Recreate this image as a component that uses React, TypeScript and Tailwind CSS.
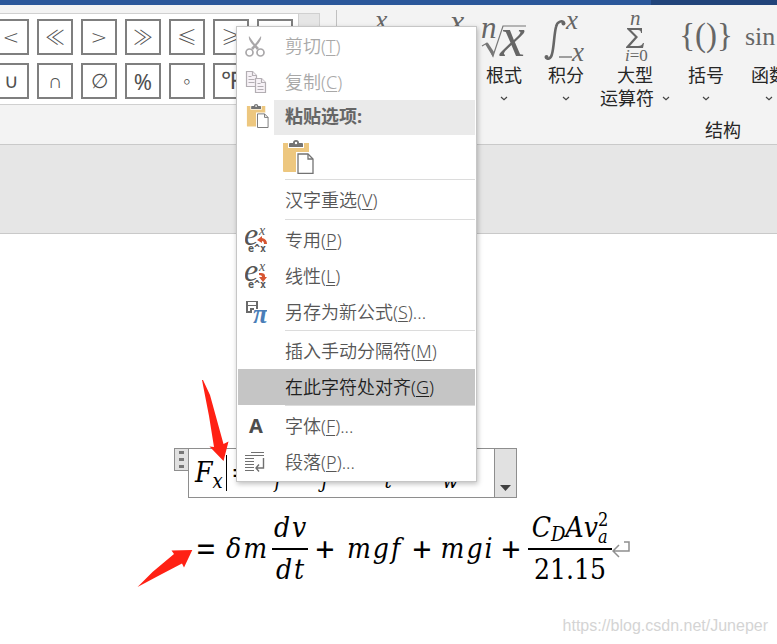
import React from "react";

const uiFont = "font-['Noto_Sans','Noto_Sans_CJK_SC',sans-serif]";
const cjkFont = "font-['Open_Sans','Noto_Sans_CJK_SC',sans-serif]";
const mathFont = "font-['DejaVu_Serif_Condensed','DejaVu_Serif',serif]";

const thin = "font-['DejaVu_Sans',sans-serif] text-xl font-extralight";
const wide = "font-['Noto_Sans_CJK_SC',sans-serif] text-xl font-light";
const plain = "font-['Noto_Sans',sans-serif] text-[22px] font-normal";
const serif = "font-['Liberation_Serif',serif] text-2xl font-normal";

const symbols = [
  { char: "<", style: thin },
  { char: "≪", style: wide },
  { char: ">", style: thin },
  { char: "≫", style: wide },
  { char: "≤", style: wide },
  { char: "≥", style: wide },
  { char: "∓", style: wide },
  { char: "∪", style: thin },
  { char: "∩", style: thin },
  { char: "∅", style: thin },
  { char: "%", style: plain },
  { char: "∘", style: thin },
  { char: "℉", style: serif },
  { char: "℃", style: serif },
];

function Chevron() {
  return (
    <svg width="8" height="5" viewBox="0 0 8 5" fill="none" stroke="#444" strokeWidth="1.2">
      <path d="M1 1l3 2.6L7 1" />
    </svg>
  );
}

function SymbolGallery() {
  return (
    <div className="flex w-80 shrink-0 border-y border-[#d0d0d0]">
      <div className="flex-1 overflow-hidden bg-white py-[5px]">
        <div className="-ml-[7px] grid w-[300px] grid-cols-7 gap-2">
          {symbols.map(({ char, style }) => (
            <button
              key={char}
              className={`${style} flex size-9 items-center justify-center border-2 border-[#7f7f7f] bg-white leading-none text-[#505050]`}
            >
              {char}
            </button>
          ))}
        </div>
      </div>
      <div className="w-[22px] border-x border-[#d0d0d0] bg-[#e6e6e6]" />
    </div>
  );
}

const glyphStyle = "fill-[#666] font-['Liberation_Serif',serif]";

function FractionArt() {
  return (
    <svg width="60" height="50" viewBox="0 0 60 50" className={glyphStyle}>
      <text x="24" y="15" fontSize="28" fontStyle="italic">x</text>
      <text x="24" y="44" fontSize="28" fontStyle="italic">y</text>
    </svg>
  );
}
function ScriptArt() {
  return (
    <svg width="60" height="50" viewBox="0 0 60 50" className={glyphStyle}>
      <text x="37" y="18" fontSize="32" fontStyle="italic">x</text>
      <text x="10" y="42" fontSize="40" fontStyle="italic">e</text>
    </svg>
  );
}
function RadicalArt() {
  return (
    <svg width="60" height="50" viewBox="0 0 60 50" className={glyphStyle}>
      <text x="7" y="24" fontSize="31" fontStyle="italic">n</text>
      <text x="26" y="42" fontSize="56" fontStyle="italic">x</text>
      <path d="M8 32l5-3 6 13L29 12h23" fill="none" stroke="#777" strokeWidth="1.2" />
      <path d="M11 30l3-1 6 9-1 5z" fill="#777" />
    </svg>
  );
}
function IntegralArt() {
  return (
    <svg width="60" height="50" viewBox="0 0 60 50" className={glyphStyle}>
      <path
        d="M28 9c-1-3-7-2-8 4-2 8-2 20-4 27-1 5-5 6-6 3"
        fill="none"
        stroke="#666"
        strokeWidth="2.6"
      />
      <circle cx="27.500" cy="9.500" r="2" />
      <circle cx="10.500" cy="43" r="2" />
      <text x="30" y="15" fontSize="27" fontStyle="italic">x</text>
      <path d="M23 43h13" stroke="#666" strokeWidth="1.2" />
      <text x="36" y="47" fontSize="27" fontStyle="italic">x</text>
    </svg>
  );
}
function SumArt() {
  return (
    <svg width="60" height="50" viewBox="0 0 60 50" className={glyphStyle}>
      <text x="25" y="11" fontSize="21" fontStyle="italic">n</text>
      <path d="M22 14h15v5h-1c0-2-1-3-3-3h-7l7 7-8 9h8c3 0 4-1 5-3h1l-1 5H21v-1l9-10-8-8z" />
      <text x="20" y="47" fontSize="17">
        <tspan fontStyle="italic">i</tspan>=0
      </text>
    </svg>
  );
}
function BracketArt() {
  return (
    <svg width="60" height="50" viewBox="0 0 60 50" className={glyphStyle}>
      <text x="30" y="32" fontSize="33" textAnchor="middle">{"{()}"}</text>
    </svg>
  );
}
function SinArt() {
  return (
    <svg width="60" height="50" viewBox="0 0 60 50" className={glyphStyle}>
      <text x="6" y="31" fontSize="26">sin</text>
      <text x="42" y="31" fontSize="26" fontStyle="italic">θ</text>
    </svg>
  );
}

const structures = [
  { label: "分数", width: "w-[62px]", art: <FractionArt /> },
  { label: "上下标", width: "w-[61px]", art: <ScriptArt /> },
  { label: "根式", width: "w-[62px]", art: <RadicalArt /> },
  { label: "积分", width: "w-[62px]", art: <IntegralArt /> },
  { label: "大型", second: "运算符", width: "w-[76px]", art: <SumArt /> },
  { label: "括号", width: "w-[66px]", art: <BracketArt /> },
  { label: "函数", width: "w-[60px]", art: <SinArt /> },
];

function Ribbon() {
  return (
    <header>
      <div className="flex h-[5px] bg-[#2b579a]">
        <div className="ml-auto w-[126px] bg-[#21447a]" />
      </div>
      <div className="flex h-[140px] items-start overflow-hidden border-b border-[#c9c9c9] bg-[#f3f3f3]">
        <div className="mt-2">
          <SymbolGallery />
        </div>
        <div className="mt-[5px] ml-4 h-32 w-px shrink-0 bg-[#c0c0c0]" />
        <div className="ml-[13px] flex shrink-0 flex-col">
          <div className="flex h-[111px] pt-[9px]">
            {structures.map((s) => (
              <button
                key={s.label}
                className={`${s.width} ${cjkFont} flex shrink-0 flex-col items-center text-lg leading-[23px] whitespace-nowrap text-[#262626]`}
              >
                {s.art}
                <span>{s.label}</span>
                {s.second ? (
                  <span className="flex items-center gap-2">
                    {s.second}
                    <Chevron />
                  </span>
                ) : (
                  <span className="flex h-[23px] items-center">
                    <Chevron />
                  </span>
                )}
              </button>
            ))}
          </div>
          <div className={`${cjkFont} pl-[355px] text-lg leading-7 text-[#262626]`}>结构</div>
        </div>
      </div>
    </header>
  );
}

function CutIcon() {
  return (
    <svg width="20" height="22" viewBox="0 0 20 22" fill="none" stroke="#a9a7a9">
      <path d="M4 1c-1 3 2 7 4 9l4 5 2-2L9 8z" fill="#a9a7a9" stroke="none" />
      <path d="M16 1c1 3-2 7-4 9l-4 5-2-2 5-5z" fill="#a9a7a9" stroke="none" />
      <circle cx="4.500" cy="17.500" r="3.500" strokeWidth="1.7" />
      <circle cx="15.500" cy="17.500" r="3.500" strokeWidth="1.7" />
    </svg>
  );
}
function CopyIcon() {
  return (
    <svg width="22" height="22" viewBox="0 0 22 22" fill="#f7f2f7" stroke="#b3aeb3" strokeWidth="1.200">
      <path d="M1.500.500h6l4 4v11h-10z" />
      <path d="M7.500.500v4h4M3.500 5.500h3M3.500 8.500h6M3.500 11.500h6" />
      <path d="M10.500 7.500h6l4 4v10h-10z" />
      <path d="M16.500 7.500v4h4M12.500 12.500h3M12.500 15.500h6M12.500 18.500h6" />
    </svg>
  );
}
function PasteIcon({ className }: { className: string }) {
  return (
    <svg viewBox="0 0 32 34" className={className}>
      <path d="M1 3h26v29H2q-1 0-1-1z" fill="#edc77f" />
      <path d="M6 2h16v6H6z" fill="#fff" />
      <path d="M7 7V4q0-1 1-1h3q0-3 3-3t3 3h3q1 0 1 1v3z" fill="#737373" />
      <circle cx="14" cy="3" r="1.200" fill="#fff" />
      <path d="M14 12h13l5 5v17H14z" fill="#fff" />
      <path d="M16 14h10l5 5v14.300H16z" fill="#fff" stroke="#737373" strokeWidth="1.300" />
      <path d="M26 14v5h5" fill="none" stroke="#737373" strokeWidth="1.300" />
    </svg>
  );
}
function FormulaIcon({ down }: { down?: boolean }) {
  return (
    <svg width="22" height="25" viewBox="0 0 22 25" fill="#555">
      <text x="-1" y="17" fontSize="32" fontStyle="italic" fontFamily="Liberation Serif">e</text>
      <text x="14" y="7" fontSize="14" fontStyle="italic" fontFamily="Liberation Serif">x</text>
      <text x="3" y="24" fontSize="10" fontWeight="bold" fontFamily="DejaVu Sans Mono">e^x</text>
      {down ? (
        <path d="M14 9h2q4 0 4 3v1h2l-4 5-4-5h3q0-2-3-2z" fill="#d65532" />
      ) : (
        <path d="M12 12l5-4v2q5 1 5 6h-3q0-3-2-3v2z" fill="#d65532" />
      )}
    </svg>
  );
}
function SaveFormulaIcon() {
  return (
    <svg width="22" height="24" viewBox="0 0 22 24">
      <path d="M1 1h12v8h-2V6H3v5h4v2H1z" fill="#6a6a6a" />
      <path d="M3 2h8v3H3z" fill="#fff" />
      <path d="M5 8h4v2H7v2H5z" fill="#6a6a6a" />
      <text x="8" y="23" fontSize="27" fontStyle="italic" fontWeight="bold" fontFamily="Liberation Serif" fill="#4a7eb8">π</text>
    </svg>
  );
}
function ParagraphIcon() {
  return (
    <svg width="20" height="20" viewBox="0 0 20 20" fill="none" stroke="#707070">
      <path d="M6 .500h13M0 3.500h19M0 6.500h9M0 9.500h9M0 12.500h9M0 15.500h9M0 18.500h9" />
      <path d="M18.500 6v10H11M14 12.500l-3 3.500 3 3.500" strokeWidth="1.400" />
    </svg>
  );
}

type ItemProps = {
  label: string;
  hotkey: string;
  more?: boolean;
  icon?: React.ReactNode;
  disabled?: boolean;
  active?: boolean;
};

function MenuItem({ label, hotkey, more, icon, disabled, active }: ItemProps) {
  const tone = disabled ? "text-[#a8a8a8]" : active ? "text-[#1f1f1f]" : "text-[#565656]";
  return (
    <button
      role="menuitem"
      disabled={disabled}
      className={`flex h-9 w-full items-center text-left text-lg leading-6 ${tone} ${active ? "bg-[#c5c5c5]" : ""}`}
    >
      <span className="flex w-[47px] shrink-0 items-center pl-[7px]">{icon}</span>
      <span className="font-[350] whitespace-nowrap">
        {label}(<span className="underline decoration-1 underline-offset-2">{hotkey}</span>){more && "..."}
      </span>
    </button>
  );
}

function MenuDivider() {
  return <div className="ml-[47px] h-[3px] border-t border-[#dcdcdc]" />;
}

function ContextMenu() {
  return (
    <div
      role="menu"
      className={`${uiFont} absolute top-[26px] left-[236px] w-[241px] border border-[#c6c6c6] bg-white p-px shadow-[1px_2px_5px_rgba(0,0,0,0.25)]`}
    >
      <MenuItem label="剪切" hotkey="T" disabled icon={<CutIcon />} />
      <MenuItem label="复制" hotkey="C" disabled icon={<CopyIcon />} />
      <div className="flex h-9 items-start">
        <span className="flex w-9 shrink-0 pt-1 pl-2">
          <PasteIcon className="h-6 w-[23px]" />
        </span>
        <span className="h-[35px] flex-1 bg-[#eaeaea] pl-[11px] text-lg leading-[33px] font-bold text-[#666]">
          粘贴选项:
        </span>
      </div>
      <div className="flex h-[43px] pt-1 pl-11">
        <button role="menuitem" aria-label="粘贴" className="h-[34px]">
          <PasteIcon className="h-[34px] w-8" />
        </button>
      </div>
      <MenuDivider />
      <MenuItem label="汉字重选" hotkey="V" />
      <div className="h-px" />
      <MenuDivider />
      <MenuItem label="专用" hotkey="P" icon={<FormulaIcon />} />
      <MenuItem label="线性" hotkey="L" icon={<FormulaIcon down />} />
      <MenuItem label="另存为新公式" hotkey="S" more icon={<SaveFormulaIcon />} />
      <MenuDivider />
      <MenuItem label="插入手动分隔符" hotkey="M" />
      <MenuItem label="在此字符处对齐" hotkey="G" active />
      <MenuDivider />
      <MenuItem
        label="字体"
        hotkey="F"
        more
        icon={<span className="pl-1 text-xl font-bold text-[#4d4d4d]">A</span>}
      />
      <MenuItem label="段落" hotkey="P" more icon={<ParagraphIcon />} />
    </div>
  );
}

function Sub({ children }: { children: React.ReactNode }) {
  return <span className="mt-3 text-xl leading-none">{children}</span>;
}

function Vars({ children }: { children: string }) {
  return (
    <span className="flex gap-[2px] italic">
      {children.split("").map((c, i) => (
        <span key={i}>{c}</span>
      ))}
    </span>
  );
}

function Operator({ plus }: { plus?: boolean }) {
  return <span className="flex w-[18px] justify-center font-['Noto_Sans',sans-serif] text-[34px] font-normal">{plus ? "+" : "="}</span>;
}

function EquationEditor() {
  return (
    <div className="flex items-start pl-[174px]">
      <div className="flex h-[23px] w-[14px] flex-col items-center justify-center gap-1 border border-r-0 border-[#8e8e8e] bg-[#e1e1e1]">
        <i className="h-[3px] w-[5px] bg-[#777]" />
        <i className="h-[3px] w-[5px] bg-[#777]" />
        <i className="h-[3px] w-[5px] bg-[#777]" />
      </div>
      <div className="flex h-[50px] w-[329px] border border-[#8e8e8e]">
        <div className={`${mathFont} flex flex-1 items-start pt-[10px] pl-[6px] text-[28px] leading-none italic`}>
          <span className="flex w-[31px]">F<Sub>x</Sub></span>
          <span className="-mt-1 h-9 w-px bg-black" />
          <span className="ml-1 w-[26px] not-italic">=</span>
          <span className="flex w-[47px]">F<Sub>f</Sub></span>
          <span className="flex w-[63px]">F<Sub>j</Sub></span>
          <span className="flex w-[58px]">F<Sub>t</Sub></span>
          <span className="flex">F<Sub>w</Sub></span>
        </div>
        <button aria-label="公式选项" className="flex w-[22px] items-end justify-center border-l border-[#8e8e8e] bg-[#e1e1e1] pb-[6px]">
          <svg width="11" height="6" viewBox="0 0 11 6" fill="#404040">
            <path d="M0 0h11L5.500 6z" />
          </svg>
        </button>
      </div>
    </div>
  );
}

function Equation() {
  return (
    <div className={`${mathFont} mt-3 flex items-center pl-[197px] text-[28px] leading-9`}>
      <Operator />
      <span className="ml-[11px]">
        <Vars>δm</Vars>
      </span>
      <span className="ml-[5px] flex w-9 flex-col items-center">
        <Vars>dv</Vars>
        <span className="my-[2px] h-[2px] w-full bg-black" />
        <Vars>dt</Vars>
      </span>
      <span className="ml-2">
        <Operator plus />
      </span>
      <span className="flex w-[79px] justify-center">
        <Vars>mgf</Vars>
      </span>
      <Operator plus />
      <span className="flex w-[71px] justify-center">
        <Vars>mgi</Vars>
      </span>
      <Operator plus />
      <span className="ml-2 flex w-[84px] flex-col items-center">
        <span className="flex items-center italic">
          C<Sub>D</Sub>
          <span>A</span>
          <span>v</span>
          <span className="flex flex-col text-lg leading-[17px]">
            <span className="not-italic">2</span>
            <span>a</span>
          </span>
        </span>
        <span className="my-[2px] h-[2px] w-full bg-black" />
        <span>21.15</span>
      </span>
      <svg width="18" height="17" viewBox="0 0 18 17" fill="none" stroke="#8e8e8e" strokeWidth="1.500">
        <path d="M12 1h5v9H1M7 4l-6 6 6 6" />
      </svg>
    </div>
  );
}

function RedArrows() {
  return (
    <svg className="pointer-events-none absolute top-[375px] left-[130px]" width="110" height="220" viewBox="130 375 110 220" fill="#ff2114">
      <path d="M202 380h1l7 15 13.500 49 5-2.500L223.500 461l-14-14.500 4.500.500-5-31z" />
      <path d="M137.500 587l15-15 21.500-18-2.500-3.500L192.300 550 184 567.500l-2-4L160 575z" />
    </svg>
  );
}

export default function App() {
  return (
    <div className="relative min-h-screen overflow-hidden bg-white text-black">
      <Ribbon />
      <div className="h-[89px] border-b border-[#c9c9c9] bg-[#e6e6e6]" />
      <main className="pt-[214px]">
        <EquationEditor />
        <Equation />
      </main>
      <ContextMenu />
      <RedArrows />
      <a
        href="https://blog.csdn.net/Juneper"
        className="absolute right-[9px] bottom-2 font-['Liberation_Sans',sans-serif] text-base leading-5 text-[#d4d4d4]"
      >
        https://blog.csdn.net/Juneper
      </a>
    </div>
  );
}
